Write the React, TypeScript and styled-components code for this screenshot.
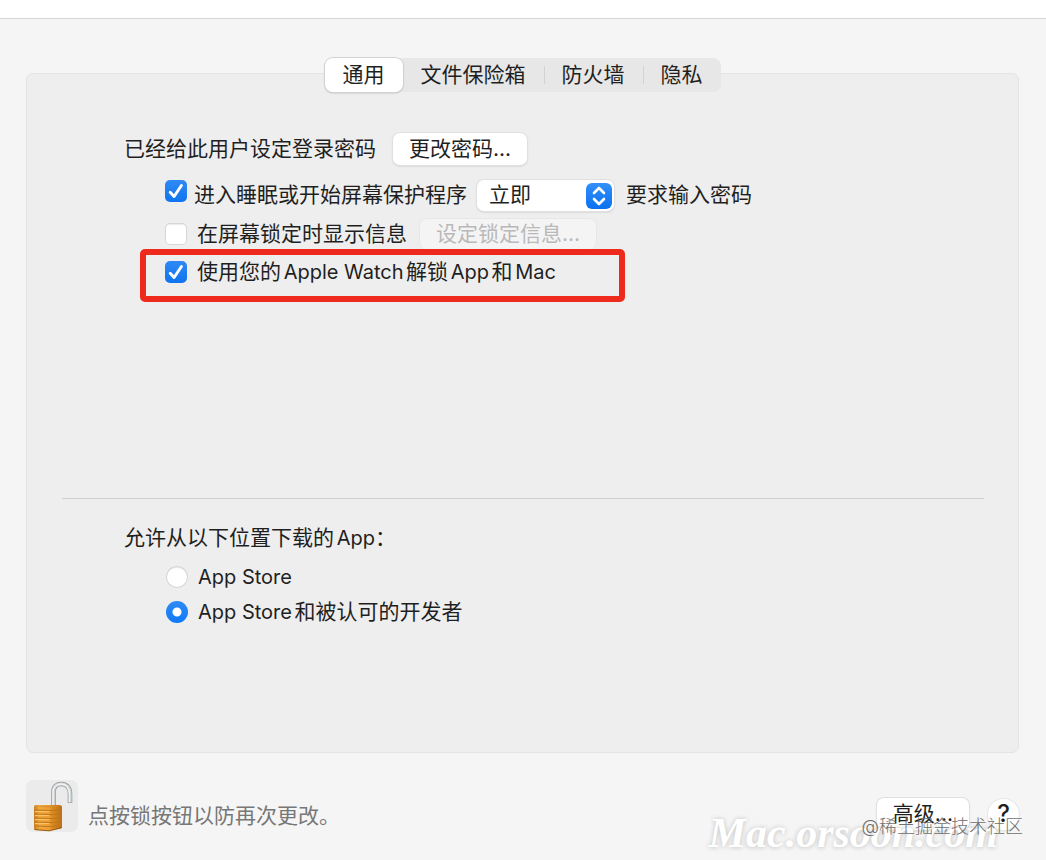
import React from "react";
import styled, { createGlobalStyle } from "styled-components";

const GlobalStyle = createGlobalStyle`
  * { box-sizing: border-box; }
  body {
    margin: 0;
    background: #f5f5f5;
    color: #1f1f1f;
    font-family: Inter, "Noto Sans CJK SC", sans-serif;
    font-size: 21px;
    line-height: 30px;
    text-autospace: normal;
  }
  button, select, input { font: inherit; color: inherit; margin: 0; }
`;

const Window = styled.div`
  position: relative;
  min-height: 100vh;
  display: flex;
  flex-direction: column;
  overflow: hidden;
`;

const TitleBar = styled.header`
  height: 19px;
  background: #fff;
  border-bottom: 1px solid #d6d6d6;
`;

const Content = styled.main`
  flex: 1;
  display: flex;
  flex-direction: column;
  padding: 39px 27px 28px 26px;
`;

const Tabs = styled.nav`
  align-self: center;
  display: flex;
  height: 34px;
  border-radius: 8px;
  background: #e7e7e7;
  z-index: 1;
`;

const Tab = styled.button<{ $active?: boolean; $divided?: boolean }>`
  position: relative;
  border: 0;
  padding: 0 18px;
  border-radius: 8px;
  background: ${(p) => (p.$active ? "#fff" : "transparent")};
  box-shadow: ${(p) => (p.$active ? "0 0 0 1px #d2d2d2, 0 1px 2px #aaa" : "none")};

  &::before {
    content: "";
    display: ${(p) => (p.$divided ? "block" : "none")};
    position: absolute;
    left: 0;
    top: 8px;
    height: 18px;
    width: 1px;
    background: #d3d3d3;
  }
`;

const Panel = styled.section`
  flex: 1;
  margin-top: -19px;
  padding: 59px 34px 24px 35px;
  border: 1px solid #e4e4e4;
  border-radius: 7px;
  background: #eee;
`;

const LoginGroup = styled.div`
  min-height: 365px;
  padding-left: 62px;
  display: flex;
  flex-direction: column;
`;

const Row = styled.div<{ $indent?: boolean; $top?: number; $height: number }>`
  position: relative;
  display: flex;
  align-items: center;
  height: ${(p) => p.$height}px;
  margin-top: ${(p) => p.$top ?? 0}px;
  padding-left: ${(p) => (p.$indent ? 41 : 0)}px;
  white-space: nowrap;
`;

const CheckLabel = styled.label<{ $compact?: boolean }>`
  display: flex;
  align-items: ${(p) => (p.$compact ? "flex-start" : "center")};
  gap: ${(p) => (p.$compact ? 7 : 10)}px;
`;

const Latin = styled.span`
  font-size: 20px;
`;

const Checkbox = styled.input.attrs({ type: "checkbox" })`
  appearance: none;
  width: 22px;
  height: 22px;
  border-radius: 5px;
  background: #fff;
  box-shadow: inset 0 0 0 1px #d6d6d6, inset 0 2px 1px #ececec;

  &:checked {
    box-shadow: none;
    background: url("data:image/svg+xml,%3Csvg xmlns='http://www.w3.org/2000/svg' viewBox='0 0 22 22'%3E%3Cpath d='M5.2 12.2l3.9 4.3 7.3-11' fill='none' stroke='white' stroke-width='2.9' stroke-linecap='round' stroke-linejoin='round'/%3E%3C/svg%3E"),
      linear-gradient(#2f8af5, #0f74ef);
  }
`;

const Radio = styled.input.attrs({ type: "radio" })`
  appearance: none;
  width: 22px;
  height: 22px;
  border-radius: 50%;
  background: #fff;
  box-shadow: inset 0 0 0 1px #d6d6d6, inset 0 2px 1px #ececec;

  &:checked {
    box-shadow: none;
    background: radial-gradient(circle, #fff 4px, transparent 5px),
      linear-gradient(#2f8af5, #0f7af8);
  }
`;

const PushButton = styled.button<{ $gap?: number }>`
  height: 32px;
  margin-left: ${(p) => p.$gap ?? 0}px;
  padding: 0 16px;
  border: 0;
  border-radius: 7px;
  background: #fff;
  box-shadow: 0 0 0 1px #e0e0e0, 0 1px 2px #b8b8b8;

  &:disabled {
    height: 30px;
    color: #b9b9b9;
    background: #f4f4f4;
    box-shadow: 0 0 0 1px #e7e7e7;
  }
`;

const SelectBox = styled.div`
  display: flex;
  position: relative;
  margin: 0 12px 0 10px;
`;

const Select = styled.select`
  appearance: none;
  width: 137px;
  height: 31px;
  padding: 0 36px 0 12px;
  border: 0;
  border-radius: 7px;
  background: #fff;
  box-shadow: 0 0 0 1px #e0e0e0, 0 1px 2px #b8b8b8;
`;

const Stepper = styled.svg`
  position: absolute;
  right: 2px;
  top: 3px;
  pointer-events: none;
`;

const Highlight = styled.div`
  position: absolute;
  left: 16px;
  top: -11px;
  width: 485px;
  height: 53px;
  border: 6px solid #ee2a1c;
  border-radius: 5px;
  pointer-events: none;
`;

const Divider = styled.hr`
  margin: 0;
  border: 0;
  border-top: 1px solid #cfcfcf;
`;

const DownloadGroup = styled.fieldset`
  margin: 0;
  padding: 24px 0 0 62px;
  border: 0;
`;

const Legend = styled.legend`
  float: left;
  padding: 0;
`;

const RadioList = styled.div`
  clear: both;
  padding: 9px 0 0 42px;
  display: grid;
  gap: 5px;
`;

const Footer = styled.footer`
  display: flex;
  align-items: flex-start;
  padding-top: 27px;
`;

const LockButton = styled.button`
  width: 52px;
  height: 52px;
  padding: 0;
  border: 0;
  border-radius: 7px;
  background: #ebebeb;
`;

const LockHint = styled.p`
  flex: 1;
  margin: 21px 0 0 10px;
  color: #777;
`;

const FooterActions = styled.div`
  display: flex;
  align-items: center;
  gap: 19px;
  margin-top: 18px;
`;

const HelpButton = styled.button`
  width: 31px;
  height: 31px;
  padding: 0;
  border: 0;
  border-radius: 50%;
  background: #fff;
  font-size: 24px;
  font-weight: 500;
  box-shadow: 0 0 0 1px #e8e8e8, 0 1px 2px #ccc;
`;

const SiteMark = styled.div`
  position: absolute;
  right: 48px;
  bottom: 4px;
  font: italic bold 42px/46px "Liberation Serif", serif;
  color: #fff;
  text-shadow: 0 0 5px #ccc, 0 1px 4px #ddd;
  pointer-events: none;
`;

const CommunityMark = styled.div`
  position: absolute;
  right: 23px;
  bottom: 21px;
  font-size: 18px;
  font-weight: 300;
  line-height: 24px;
  color: #707070;
  text-autospace: no-autospace;
  pointer-events: none;
`;

function OpenLock() {
  return (
    <svg width="52" height="52" viewBox="0 0 52 52" aria-hidden="true">
      <defs>
        <linearGradient id="gold" x1="0" x2="1">
          <stop offset="0" stopColor="#c98020" />
          <stop offset=".2" stopColor="#f0aa40" />
          <stop offset=".55" stopColor="#eb9d30" />
          <stop offset=".65" stopColor="#d98a22" />
          <stop offset="1" stopColor="#b97016" />
        </linearGradient>
      </defs>
      <path d="M27.500 28V12C27.500 6 31 4 35.500 4S44 7 44 14v9" fill="none" stroke="#96999b" strokeWidth="4.600" />
      <path d="M27.500 28V12C27.500 6 31 4 35.500 4S44 7 44 14v8.500" fill="none" stroke="#ced2d4" strokeWidth="3.200" />
      <path d="M27 27V12C27 7 31 4 35.500 4S43.500 8 43.500 14v8" fill="none" stroke="#f4f5f5" strokeWidth="1.300" />
      <path d="M8 27q0-2 2-2h23q3 0 3 2v21l-13 3-14-1q-1 0-1-2z" fill="url(#gold)" />
      <path d="M9 26h25l-11 1.500z" fill="#d78f30" />
      <path d="M8 30l15 .5 13-.5M8 34l15 .5 13-.5M8 38l15 .5 13-.5M8 42l15 .5 13-.5M8 46l15 .5 13-1" fill="none" stroke="#c07618" strokeWidth="1" />
      <path d="M9 31.500h14M9 35.500h14M9 39.500h14M9 43.500h14" stroke="#fbc164" strokeWidth="1" />
      <path d="M8.500 49.500l14.500 1.300 12.500-3" fill="none" stroke="#9a5c14" strokeWidth="1" />
    </svg>
  );
}

export default function App() {
  return (
    <>
      <GlobalStyle />
      <Window>
        <TitleBar />
        <Content>
          <Tabs>
            <Tab $active>通用</Tab>
            <Tab>文件保险箱</Tab>
            <Tab $divided>防火墙</Tab>
            <Tab $divided>隐私</Tab>
          </Tabs>
          <Panel>
            <LoginGroup>
              <Row $height={32}>
                <span>已经给此用户设定登录密码</span>
                <PushButton $gap={17}>更改密码...</PushButton>
              </Row>
              <Row $height={32} $top={14} $indent>
                <CheckLabel $compact>
                  <Checkbox defaultChecked />
                  进入睡眠或开始屏幕保护程序
                </CheckLabel>
                <SelectBox>
                  <Select aria-label="要求输入密码的时间" defaultValue="now">
                    <option value="now">立即</option>
                  </Select>
                  <Stepper width="26" height="26" viewBox="0 0 26 26">
                    <defs>
                      <linearGradient id="blue" x2="0" y2="1">
                        <stop stopColor="#3390f8" />
                        <stop offset="1" stopColor="#0a70ef" />
                      </linearGradient>
                    </defs>
                    <rect width="26" height="26" rx="6" fill="url(#blue)" />
                    <path d="M8 10l5-5 5 5M8 16l5 5 5-5" fill="none" stroke="#fff" strokeWidth="2.600" strokeLinecap="round" strokeLinejoin="round" />
                  </Stepper>
                </SelectBox>
                <span>要求输入密码</span>
              </Row>
              <Row $height={30} $top={8} $indent>
                <CheckLabel>
                  <Checkbox />
                  在屏幕锁定时显示信息
                </CheckLabel>
                <PushButton $gap={13} disabled>设定锁定信息...</PushButton>
              </Row>
              <Row $height={24} $top={11} $indent>
                <CheckLabel>
                  <Checkbox defaultChecked />
                  <span>
                    使用您的<Latin>Apple Watch</Latin>解锁<Latin>App</Latin>和<Latin>Mac</Latin>
                  </span>
                </CheckLabel>
                <Highlight />
              </Row>
            </LoginGroup>
            <Divider />
            <DownloadGroup>
              <Legend>
                允许从以下位置下载的<Latin>App</Latin>：
              </Legend>
              <RadioList>
                <CheckLabel>
                  <Radio name="source" />
                  <Latin>App Store</Latin>
                </CheckLabel>
                <CheckLabel>
                  <Radio name="source" defaultChecked />
                  <span>
                    <Latin>App Store</Latin>和被认可的开发者
                  </span>
                </CheckLabel>
              </RadioList>
            </DownloadGroup>
          </Panel>
          <Footer>
            <LockButton aria-label="锁定">
              <OpenLock />
            </LockButton>
            <LockHint>点按锁按钮以防再次更改。</LockHint>
            <FooterActions>
              <PushButton>高级...</PushButton>
              <HelpButton>?</HelpButton>
            </FooterActions>
          </Footer>
        </Content>
        <SiteMark>Mac.orsoon.com</SiteMark>
        <CommunityMark>@稀土掘金技术社区</CommunityMark>
      </Window>
    </>
  );
}
